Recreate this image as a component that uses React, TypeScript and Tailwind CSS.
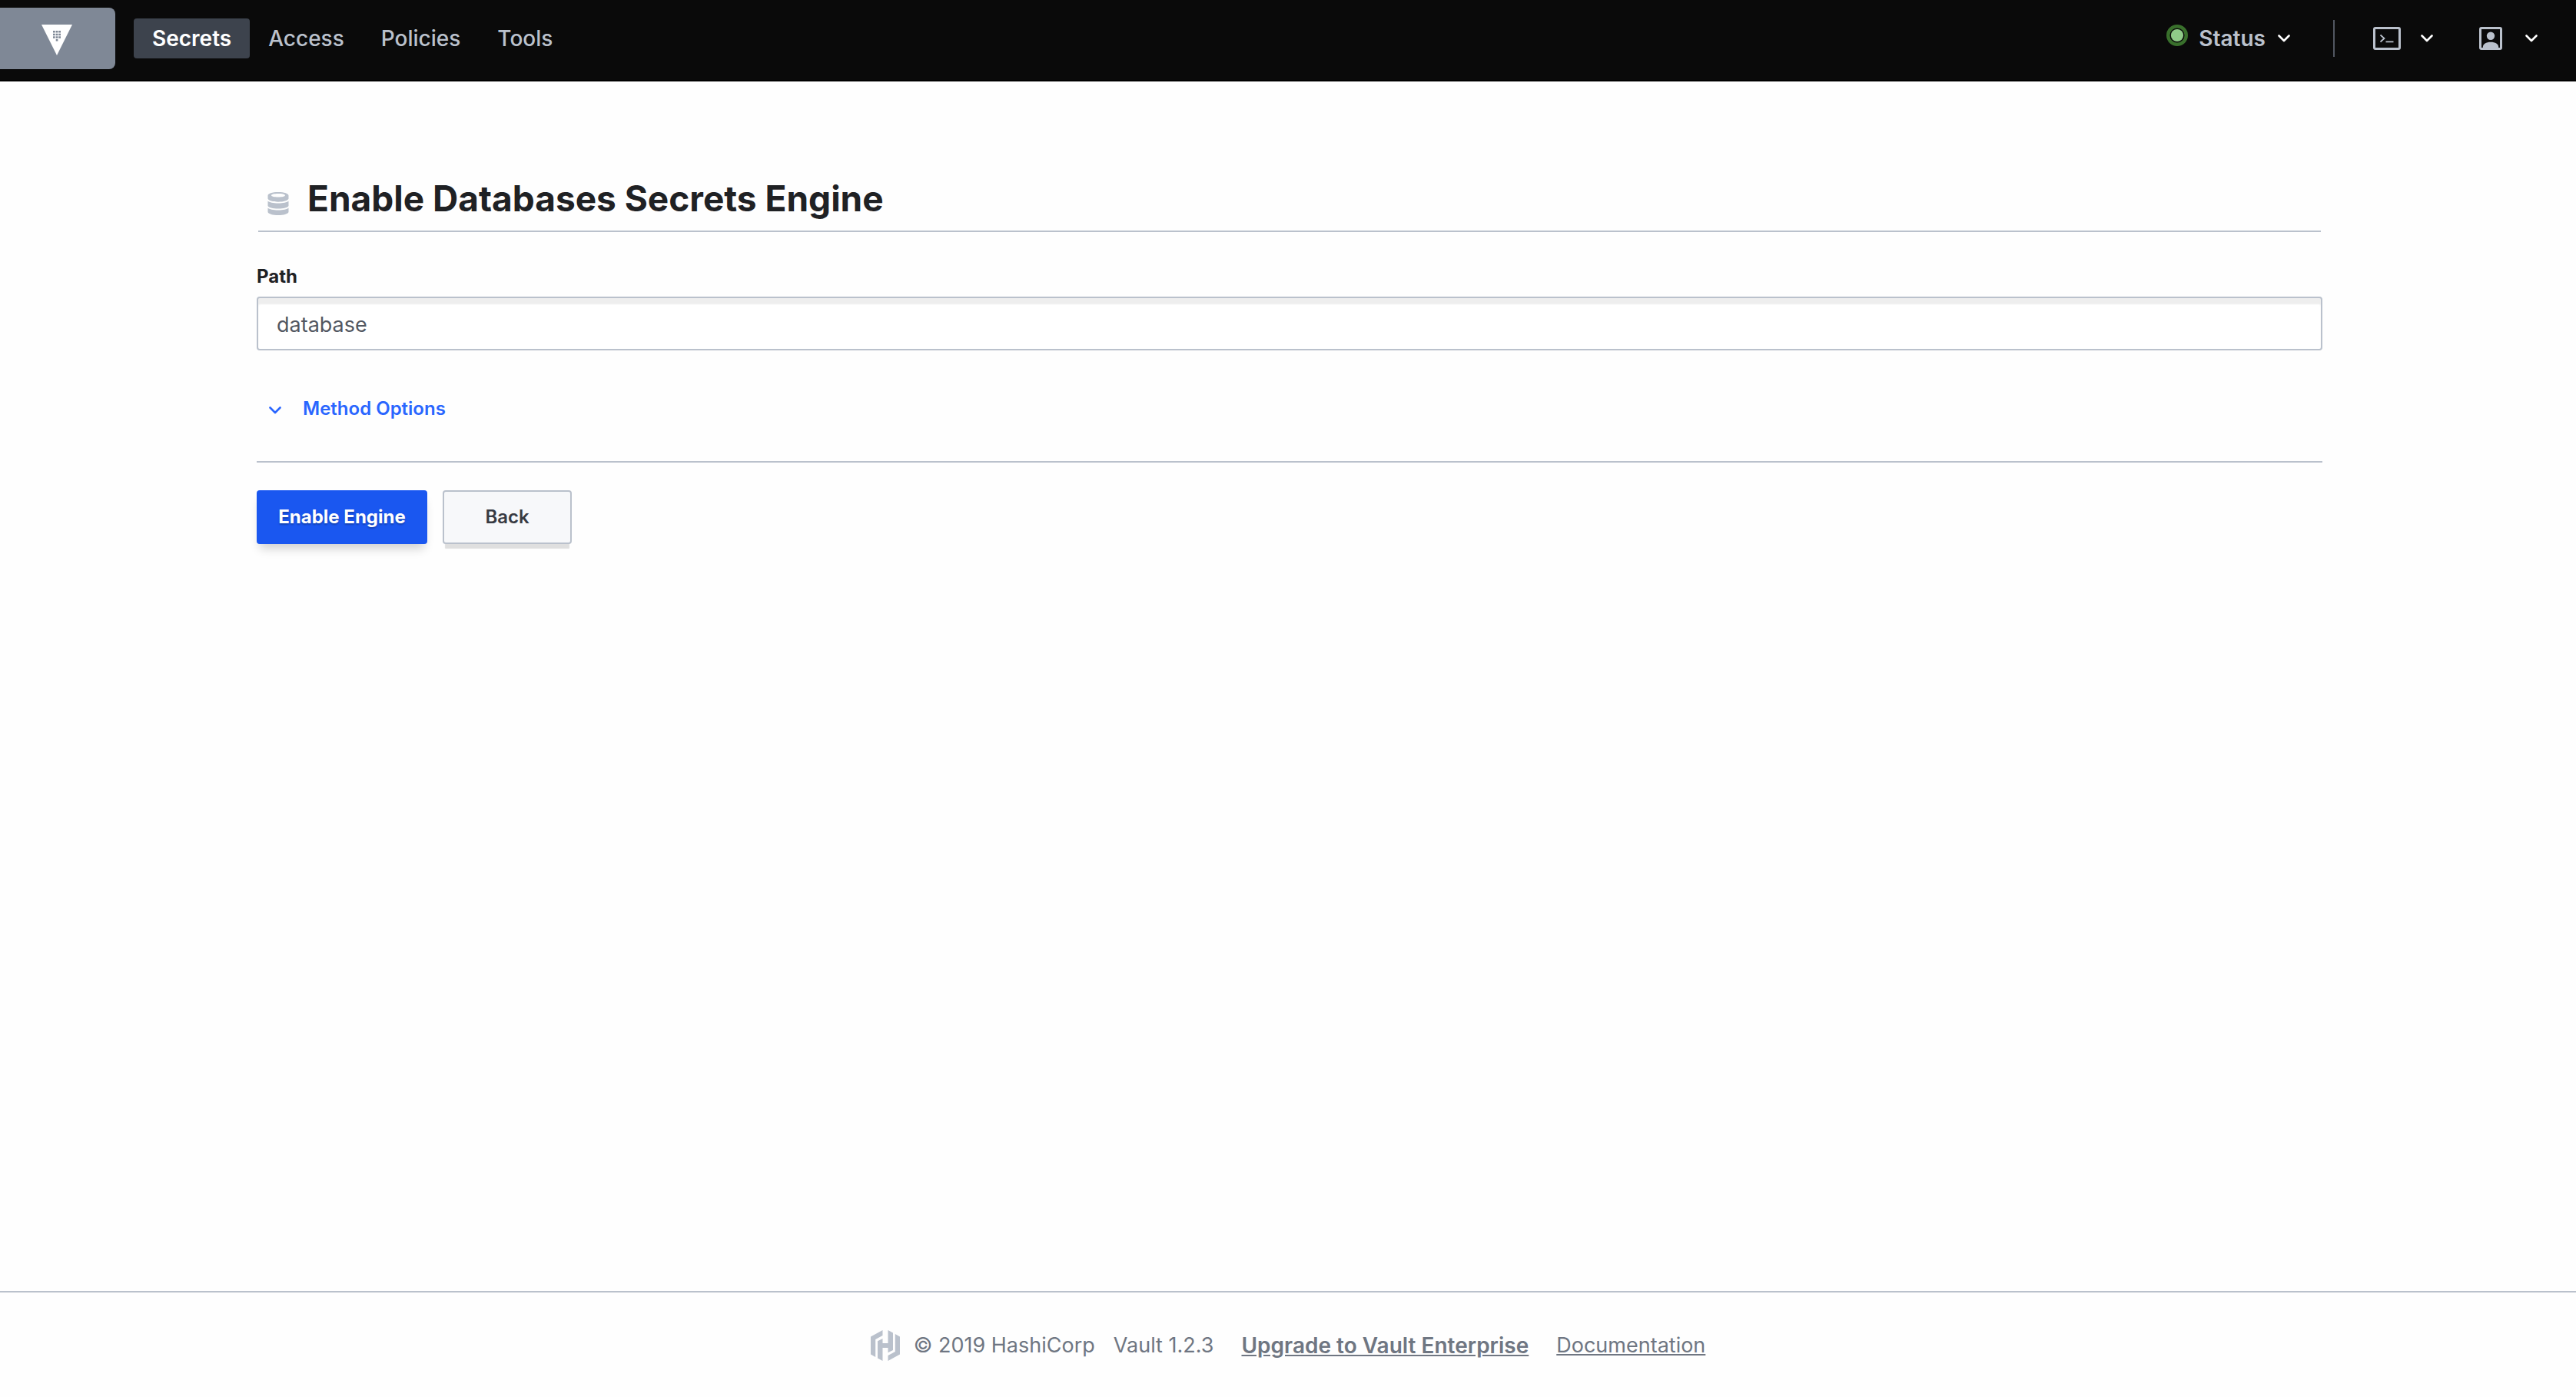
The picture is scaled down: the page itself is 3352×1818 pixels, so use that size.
import React from "react";

const navItems = [
  { label: "Access", href: "#access" },
  { label: "Policies", href: "#policies" },
  { label: "Tools", href: "#tools" },
];

function Chevron() {
  return (
    <svg viewBox="0 0 16 10" className="h-[10px] w-4 shrink-0" fill="none" stroke="currentColor" strokeWidth="2.6" strokeLinecap="round" strokeLinejoin="round" aria-hidden="true">
      <path d="M1.5 1.5 8 8l6.500-6.500" />
    </svg>
  );
}

function VaultLogo() {
  const dots = [
    [15, 8], [18.7, 8], [22.3, 8],
    [15, 11.7], [18.7, 11.7], [22.3, 11.7],
    [15, 15.3], [18.7, 15.3], [22.3, 15.3],
    [18.7, 19],
  ];
  return (
    <svg viewBox="0 0 40 40" className="size-10" aria-hidden="true">
      <path d="M0 0h40L20 40z" fill="#fff" />
      {dots.map(([x, y]) => (
        <rect key={`${x}-${y}`} x={x} y={y} width="2.700" height="2.500" fill="#7f8896" />
      ))}
    </svg>
  );
}

function StatusDot() {
  return (
    <svg viewBox="0 0 28 28" className="size-7" aria-hidden="true">
      <circle cx="14" cy="14" r="11.800" fill="none" stroke="#39702c" strokeWidth="4.400" />
      <circle cx="14" cy="14" r="8.100" fill="#8fcb88" />
    </svg>
  );
}

function TerminalIcon() {
  return (
    <svg viewBox="0 0 36 30" className="h-[30px] w-9" fill="none" stroke="currentColor" aria-hidden="true">
      <rect x="1.500" y="1.500" width="33" height="27" rx="1.500" strokeWidth="3" />
      <path d="M9.500 10.500l5 4.500-5 4.500M16.500 19.300h10" strokeWidth="1.800" />
    </svg>
  );
}

function UserIcon() {
  return (
    <svg viewBox="0 0 30 30" className="size-[30px]" aria-hidden="true">
      <rect x="1.500" y="1.500" width="27" height="27" rx="1.500" fill="none" stroke="currentColor" strokeWidth="3" />
      <circle cx="15" cy="11.800" r="5.200" fill="currentColor" />
      <path d="M4.800 28v-1.500c0-4.500 4.200-6.800 10.200-6.800s10.200 2.300 10.200 6.800V28z" fill="currentColor" />
    </svg>
  );
}

function DatabaseIcon() {
  return (
    <svg viewBox="0 0 28 30" className="h-[30px] w-7 text-[#bac1cc]" fill="currentColor" aria-hidden="true">
      <path fillRule="evenodd" d="M14 0C6 0 .5 2 .5 4.500V8.500C1.500 11 7 12.700 14 12.700S26.500 11 27.500 8.500V4.500C27.500 2 22 0 14 0zm0 2c5 0 9 .9 9 2.200S19 6.500 14 6.500 5 5.500 5 4.200 9 2 14 2z" />
      <path d="M.5 11.500c2 2 7 3 13.500 3s11.500-1 13.500-3v6.500c-1 2.200-6.500 3.500-13.500 3.500S1.500 20.200.5 18z" />
      <path d="M.5 20.500c2 2 7 3 13.500 3s11.500-1 13.500-3V26c-1 2.500-6.500 4-13.500 4S1.500 28.500.5 26z" />
    </svg>
  );
}

function HashiCorpLogo() {
  return (
    <svg viewBox="0 0 38 40" className="h-10 w-[38px] text-[#bac1cc]" fill="currentColor" aria-hidden="true">
      <path d="M15.500 0 0 8.500v23l6.200 3.500V12l9.300-5z" />
      <path d="M22.500 0v17h-7v-6L9 14.200v22.200l6.500 3.600V23h7v6.200L29 26V3.600z" />
      <path d="M31.800 5v23L22.500 33v7L38 31.500v-23z" />
    </svg>
  );
}

export default function App() {
  return (
    <div className="flex min-h-screen flex-col bg-[#fefefe] font-['Inter',sans-serif] text-[28px] leading-[42px] text-[#6f7682]">
      <header className="flex h-[106px] items-start justify-between border-b-2 border-black bg-[#0a0a0a] pt-[10px] font-medium text-[#bac1cc]">
        <div className="flex h-20 items-center">
          <a href="#home" aria-label="Vault home" className="flex h-20 w-[150px] items-center justify-center rounded-r-lg bg-[#7f8896] pr-[2px] pt-1">
            <VaultLogo />
          </a>
          <nav className="ml-6 flex items-center">
            <a href="#secrets" aria-current="page" className="flex h-[52px] items-center rounded bg-[#3d434d] px-6 font-semibold text-white">
              Secrets
            </a>
            {navItems.map((item) => (
              <a key={item.label} href={item.href} className="flex h-[52px] items-center px-6">
                {item.label}
              </a>
            ))}
          </nav>
        </div>
        <div className="flex h-20 items-center pr-[50px]">
          <button type="button" className="flex items-center font-semibold">
            <span className="mr-[14px] pb-2"><StatusDot /></span>
            Status
            <span className="ml-4 text-white"><Chevron /></span>
          </button>
          <div className="mr-[50px] ml-14 h-12 w-[2px] bg-[#525761]" />
          <button type="button" aria-label="Console" className="flex items-center gap-[26px]">
            <TerminalIcon />
            <span className="text-white"><Chevron /></span>
          </button>
          <button type="button" aria-label="User menu" className="ml-[60px] flex items-center gap-[30px]">
            <UserIcon />
            <span className="text-white"><Chevron /></span>
          </button>
        </div>
      </header>

      <main className="w-full grow pr-[330px] pl-[334px]">
        <div className="mx-[2px] flex items-end gap-6 border-b-2 border-[#bac1cc] pt-[122px] pb-3 pl-3">
          <span className="pb-2"><DatabaseIcon /></span>
          <h1 className="text-[46px] leading-[60px] font-bold text-[#1f2124]">Enable Databases Secrets Engine</h1>
        </div>
        <form onSubmit={(e) => e.preventDefault()}>
          <label htmlFor="path" className="mt-[40px] block text-[24px] leading-9 font-bold text-[#1f2124]">
            Path
          </label>
          <input
            id="path"
            type="text"
            defaultValue="database"
            className="mt-[8px] block h-[70px] w-full rounded border-2 border-[#bac1cc] bg-white px-6 pt-[2px] text-[27px] text-[#525761] shadow-[inset_0_8px_2px_0_#eeeeee] outline-none"
          />
          <button type="button" className="mt-[58px] flex items-center gap-7 pl-4 text-[24px] leading-9 font-semibold text-[#2a66ff]">
            <span className="pt-1"><Chevron /></span>
            Method Options
          </button>
          <div className="mt-[50px] flex gap-5 border-t-2 border-[#bac1cc] pt-9 text-[24px]">
            <button type="submit" className="h-[70px] w-[222px] rounded bg-[#1a57f0] font-bold text-white shadow-[0_10px_12px_-4px_rgba(0,0,0,0.18)] [text-shadow:0_2px_2px_rgba(0,0,0,0.25)]">
              Enable Engine
            </button>
            <button type="button" className="h-[70px] w-[168px] rounded border-2 border-[#bac1cc] bg-[#f7f8fa] font-semibold text-[#373a42] shadow-[0_9px_1px_-3px_rgba(0,0,0,0.12)]">
              Back
            </button>
          </div>
        </form>
      </main>

      <footer className="flex h-[138px] items-center justify-center border-t-2 border-[#bac1cc] pt-[2px] text-[27px]">
        <HashiCorpLogo />
        <span className="ml-[18px]">© 2019 HashiCorp</span>
        <span className="ml-6">Vault 1.2.3</span>
        <a href="#upgrade" className="ml-9 text-[28px] font-semibold underline">Upgrade to Vault Enterprise</a>
        <a href="#docs" className="ml-9 underline">Documentation</a>
      </footer>
    </div>
  );
}
